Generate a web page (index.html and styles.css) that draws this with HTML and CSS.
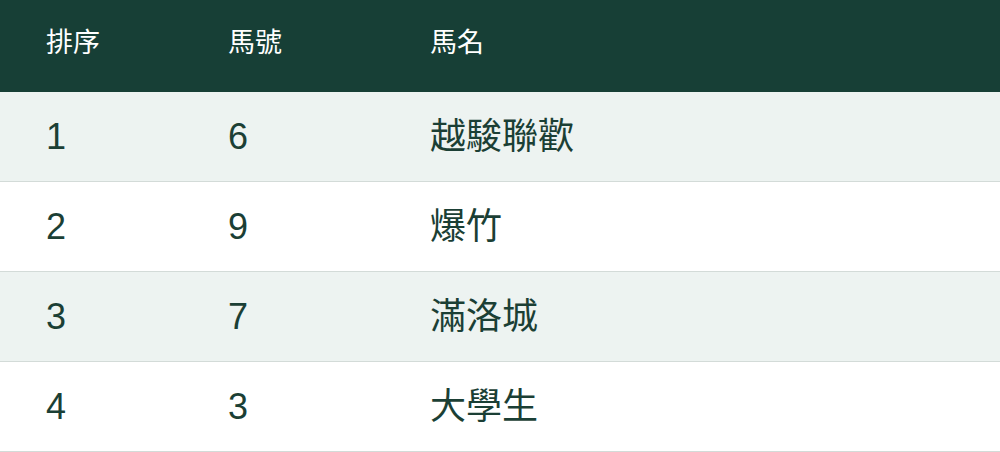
FILE: index.html
```html
<!DOCTYPE html>
<html lang="zh-Hant">
<head>
<meta charset="utf-8">
<link rel="stylesheet" href="styles.css">
</head>
<body>
<div class="table">
  <div class="row head">
    <div class="cell">排序</div>
    <div class="cell">馬號</div>
    <div class="cell">馬名</div>
  </div>
  <div class="row alt">
    <div class="cell">1</div>
    <div class="cell">6</div>
    <div class="cell">越駿聯歡</div>
  </div>
  <div class="row">
    <div class="cell">2</div>
    <div class="cell">9</div>
    <div class="cell">爆竹</div>
  </div>
  <div class="row alt">
    <div class="cell">3</div>
    <div class="cell">7</div>
    <div class="cell">滿洛城</div>
  </div>
  <div class="row">
    <div class="cell">4</div>
    <div class="cell">3</div>
    <div class="cell">大學生</div>
  </div>
</div>
</body>
</html>
```
FILE: styles.css
```css
html, body {
  margin: 0;
  padding: 0;
  background: #ffffff;
}
body {
  font-family: "Liberation Sans", "Noto Sans CJK TC", sans-serif;
  color: #1b3f35;
}
.table {
  width: 1000px;
}
.row {
  display: grid;
  grid-template-columns: 182px 202px 1fr;
  align-items: center;
  height: 89px;
  padding-left: 46px;
  border-bottom: 1px solid #d3dbd8;
  font-size: 36px;
  background: #ffffff;
}
.row.alt {
  background: #edf3f1;
}
.row.head {
  height: 92px;
  border-bottom: none;
  background: #173f36;
  color: #ffffff;
  font-size: 27px;
  padding-bottom: 6px;
  box-sizing: border-box;
}
.cell {
  line-height: 1.2;
}
```
